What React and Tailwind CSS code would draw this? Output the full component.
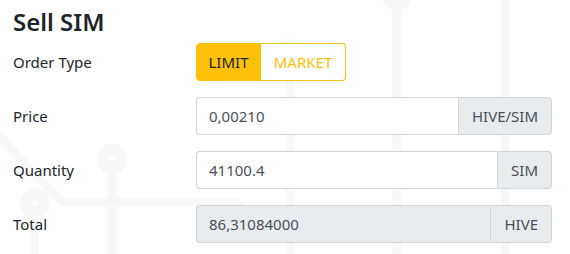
import React from 'react';

function Circuit() {
    return (
        <svg className="absolute inset-0 w-full h-full" viewBox="0 0 570 254" fill="none" stroke="#f8f8f8" strokeLinecap="round">
            <path d="M397 0 V254" strokeWidth="9" />
            <circle cx="397" cy="-4" r="9" strokeWidth="12" />
            <path d="M505 0 V254" strokeWidth="8" />
            <path d="M290 66 V254" strokeWidth="8" />
            <circle cx="290" cy="54" r="9" strokeWidth="12" />
            <path d="M112 170 V254" strokeWidth="8" />
            <circle cx="112" cy="159" r="9" strokeWidth="12" />
            <path d="M35 214 V254" strokeWidth="8" />
            <circle cx="35" cy="203" r="9" strokeWidth="12" />
            <path d="M0 137 L62 202 H236 L250 216" strokeWidth="8" />
        </svg>
    );
}

function Row({ label, children }) {
    return (
        <div className="flex items-center h-[38px]">
            <div className="w-[183px] shrink-0 text-[15px] text-[#212529]">{label}</div>
            <div className="flex-1 flex">{children}</div>
        </div>
    );
}

function InputGroup({ value, unit, disabled }) {
    return (
        <div className="flex w-full h-[38px] text-[15px] text-[#495057]">
            <div className={`flex-1 flex items-center px-3 border border-r-0 border-[#ced4da] rounded-l ${disabled ? 'bg-[#e9ecef]' : 'bg-white'}`}>
                {value}
            </div>
            <div className="flex items-center px-[13px] border border-[#ced4da] bg-[#e9ecef] rounded-r">
                {unit}
            </div>
        </div>
    );
}

export default function App() {
    return (
        <div className="relative w-[570px] h-[254px] bg-white overflow-hidden" style={{ fontFamily: '"Noto Sans", "Open Sans", sans-serif' }}>
            <Circuit />
            <div className="relative pl-[13px] pr-[18px] pt-[7px]">
                <h4 className="text-[24px] leading-[29px] font-semibold text-[#212529]">Sell SIM</h4>
                <div className="mt-[7px] flex flex-col gap-4">
                    <Row label="Order Type">
                        <div className="flex h-[38px] text-[15px]">
                            <button className="w-[65px] bg-[#ffc107] border border-[#ffc107] text-[#212529] rounded-l">LIMIT</button>
                            <button className="w-[85px] bg-white border border-l-0 border-[#ffc107] text-[#ffc107] rounded-r">MARKET</button>
                        </div>
                    </Row>
                    <Row label="Price">
                        <InputGroup value="0,00210" unit="HIVE/SIM" />
                    </Row>
                    <Row label="Quantity">
                        <InputGroup value="41100.4" unit="SIM" />
                    </Row>
                    <Row label="Total">
                        <InputGroup value="86,31084000" unit="HIVE" disabled />
                    </Row>
                </div>
            </div>
        </div>
    );
}
